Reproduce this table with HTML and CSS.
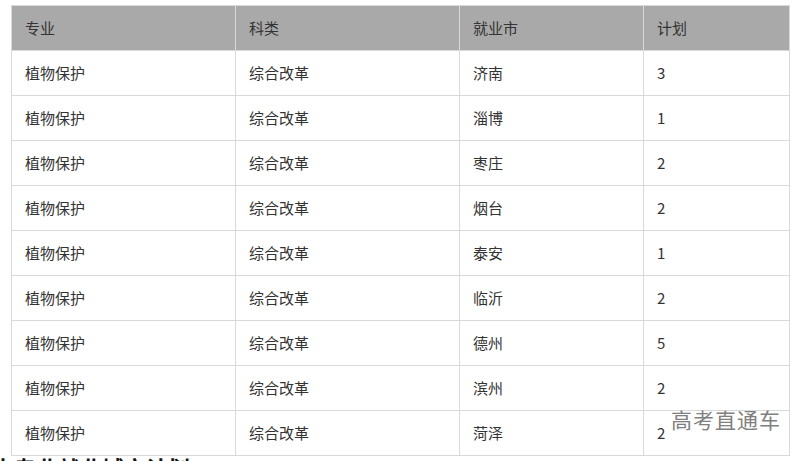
FILE: index.html
```html
<!DOCTYPE html>
<html lang="zh">
<head>
<meta charset="utf-8">
<title>招生计划</title>
<link rel="stylesheet" href="styles.css">
</head>
<body>
<div class="page">
  <table class="plan">
    <colgroup>
      <col class="c1"><col class="c2"><col class="c3"><col class="c4">
    </colgroup>
    <thead>
      <tr><th>专业</th><th>科类</th><th>就业市</th><th>计划</th></tr>
    </thead>
    <tbody>
      <tr><td>植物保护</td><td>综合改革</td><td>济南</td><td>3</td></tr>
      <tr><td>植物保护</td><td>综合改革</td><td>淄博</td><td>1</td></tr>
      <tr><td>植物保护</td><td>综合改革</td><td>枣庄</td><td>2</td></tr>
      <tr><td>植物保护</td><td>综合改革</td><td>烟台</td><td>2</td></tr>
      <tr><td>植物保护</td><td>综合改革</td><td>泰安</td><td>1</td></tr>
      <tr><td>植物保护</td><td>综合改革</td><td>临沂</td><td>2</td></tr>
      <tr><td>植物保护</td><td>综合改革</td><td>德州</td><td>5</td></tr>
      <tr><td>植物保护</td><td>综合改革</td><td>滨州</td><td>2</td></tr>
      <tr><td>植物保护</td><td>综合改革</td><td>菏泽</td><td>2</td></tr>
    </tbody>
  </table>
  <p class="after">本专业就业城市计划</p>
  <div class="watermark">高考直通车</div>
</div>
</body>
</html>
```
FILE: styles.css
```css
html, body {
  margin: 0;
  padding: 0;
  background: #fff;
}
body {
  font-family: "Noto Sans CJK SC", "Liberation Sans", sans-serif;
  color: #333;
}
.page {
  position: relative;
  width: 809px;
  height: 461px;
  overflow: hidden;
  padding-top: 5px;
  box-sizing: border-box;
}
.plan {
  border-collapse: collapse;
  table-layout: fixed;
  width: 778px;
  margin-left: 11px;
  font-size: 15px;
}
.plan .c1 { width: 224px; }
.plan .c2 { width: 224px; }
.plan .c3 { width: 184px; }
.plan .c4 { width: 146px; }
.plan tr {
  height: 45px;
}
.plan th,
.plan td {
  border: 1px solid #d9d9d9;
  padding: 0 0 0 13px;
  text-align: left;
  font-weight: normal;
  line-height: 20px;
  vertical-align: middle;
}
.plan th {
  background: #a9a9a9;
  color: #333;
}
.plan td {
  color: #333;
}
.after {
  margin: 0;
  font-size: 22px;
  line-height: 22px;
  font-weight: bold;
  color: #111;
  white-space: nowrap;
  text-indent: -8px;
}
.watermark {
  position: absolute;
  left: 671px;
  top: 406px;
  font-size: 21px;
  letter-spacing: 1px;
  color: #808080;
  line-height: 26px;
}
```
